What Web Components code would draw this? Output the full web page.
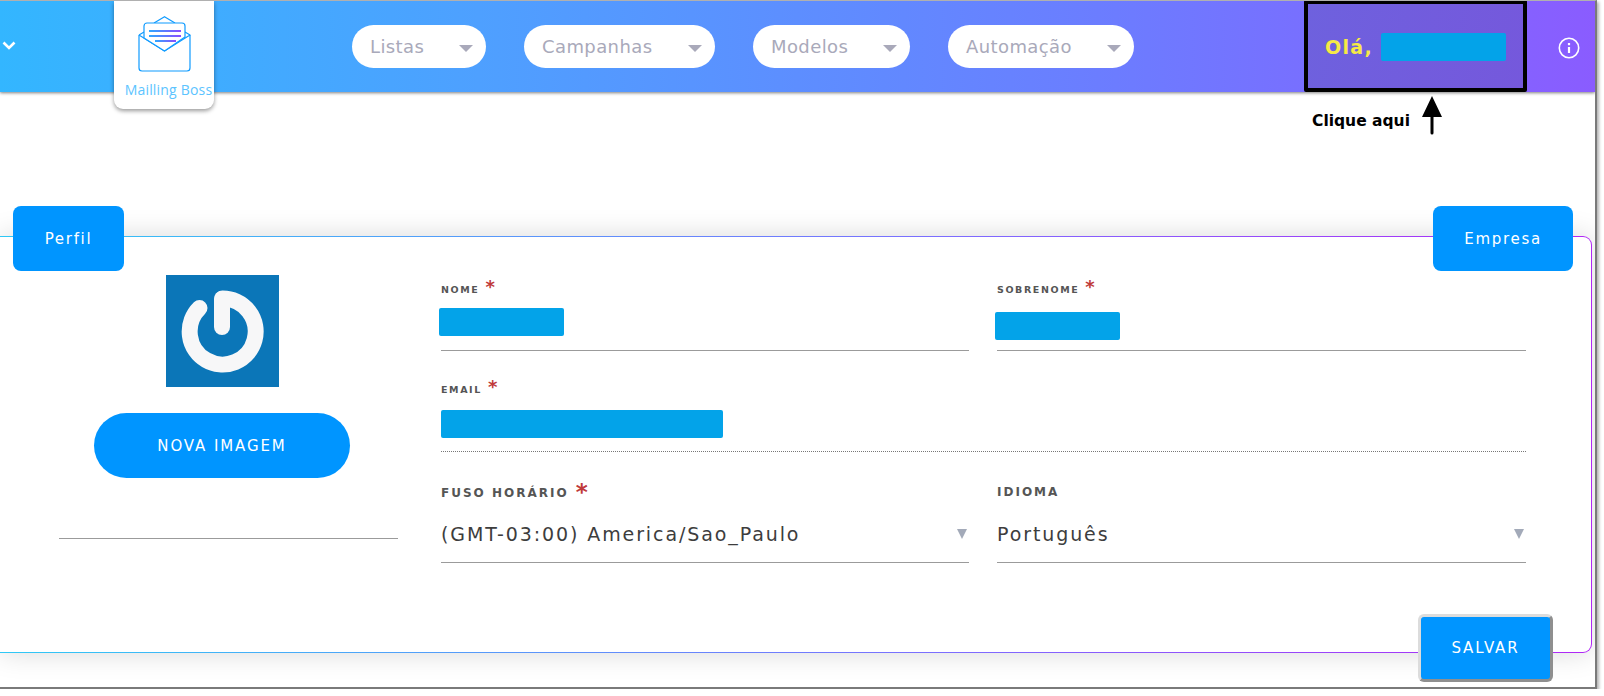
<!DOCTYPE html>
<html lang="pt">
<head>
<meta charset="utf-8">
<title>Mailling Boss</title>
<style>
  html, body { margin: 0; padding: 0; background: #fff; }
  body { font-family: "DejaVu Sans", sans-serif; }
</style>
</head>
<body>
<mb-window>
  <mb-header slot="header">
    <nav-pill style="width:134px">Listas</nav-pill>
    <nav-pill style="width:191px">Campanhas</nav-pill>
    <nav-pill style="width:157px">Modelos</nav-pill>
    <nav-pill style="width:186px">Automação</nav-pill>
  </mb-header>
  <profile-card>
    <mb-tab slot="tabs" style="width:111px">Perfil</mb-tab>
    <mb-tab slot="tabs" style="width:140px">Empresa</mb-tab>

    <form-field label="Nome" required style="height:76px">
      <redact-block style="width:125px;margin:13px 0 0 -2px"></redact-block>
    </form-field>
    <form-field label="Sobrenome" required style="height:76px">
      <redact-block style="width:125px;margin:17px 0 0 -2px"></redact-block>
    </form-field>
    <form-field label="Email" required dotted wide style="height:77px">
      <redact-block style="width:282px;margin:15px 0 0 0"></redact-block>
    </form-field>
    <form-field label="Fuso horário" required big select style="height:87px">(GMT-03:00) America/Sao_Paulo</form-field>
    <form-field label="Idioma" big select style="height:87px">Português</form-field>
  </profile-card>
</mb-window>

<script>
class MbWindow extends HTMLElement {
  constructor() {
    super();
    this.attachShadow({ mode: 'open' });
    this.shadowRoot.innerHTML = `
      <style>
        :host {
          display: block;
          position: relative;
          box-sizing: border-box;
          width: 1597px;
          height: 689px;
          border-top: 1px solid #b0b0b0;
          border-right: 2px solid #7a7a7a;
          border-bottom: 2px solid #7a7a7a;
          background: #fff;
          box-shadow: 2px 2px 3px rgba(0, 0, 0, .3);
          overflow: hidden;
        }
      </style>
      <slot name="header"></slot>
      <slot></slot>
    `;
  }
}

class MbHeader extends HTMLElement {
  constructor() {
    super();
    this.attachShadow({ mode: 'open' });
    this.shadowRoot.innerHTML = `
      <style>
        :host {
          display: flex;
          align-items: flex-start;
          position: relative;
          z-index: 2;
          height: 91px;
          background: linear-gradient(90deg, #33b6ff 0%, #4ea0ff 30%, #6c7cff 70%, #8a5cff 100%);
          box-shadow: 0 1px 3px rgba(0, 0, 0, .5);
        }
        .chevron { margin: 40px 0 0 2px; width: 14px; height: 9px; flex: none; }
        .logo {
          flex: none;
          box-sizing: border-box;
          width: 100px;
          height: 108px;
          margin-left: 98px;
          padding-top: 15px;
          background: #fff;
          border-radius: 0 0 9px 9px;
          box-shadow: 0 2px 4px rgba(0, 0, 0, .4);
          text-align: center;
          font: 14px "Open Sans", sans-serif;
          letter-spacing: .2px;
          color: #5cc4ff;
        }
        .logo svg { display: block; margin: 0 0 8px 24px; }
        .logo span { display: block; white-space: nowrap; margin-left: 9px; }
        nav { display: flex; gap: 38px; margin: 24px 0 0 138px; }
        .user {
          flex: none;
          box-sizing: border-box;
          display: flex;
          align-items: center;
          width: 223px;
          height: 92px;
          margin: -1px 0 0 170px;
          padding: 2px 0 0 17px;
          border: 4px solid #000;
          border-radius: 2px;
          background: linear-gradient(100deg, #6e61de, #7558dc);
          font: bold 19px "DejaVu Sans", sans-serif;
          letter-spacing: 1.3px;
          color: #f6e946;
        }
        .user redact-block { margin-left: 8px; }
        .info { flex: none; margin: 36px 0 0 31px; }
      </style>
      <svg class="chevron" viewBox="0 0 14 9" fill="none" stroke="#fff" stroke-width="2.6"><path d="M1.5 1.5 7 7l5.5-5.5"/></svg>
      <div class="logo">
        <svg width="54" height="56" viewBox="0 0 54 56" fill="none">
          <defs>
            <linearGradient id="ln" x1="0" x2="1" y1="0" y2="0"><stop offset="0" stop-color="#2fa8ff"/><stop offset="1" stop-color="#8a4dff"/></linearGradient>
          </defs>
          <g stroke="#0f9bff" stroke-width="1.2" stroke-linejoin="round">
            <path d="M1 19V52a3 3 0 0 0 3 3H49a3 3 0 0 0 3-3V19"/>
            <path d="M1 19 6 16M1 19 26.5 35 52 19 47 16"/>
            <path d="M16 7 26.5 .7 37 7"/>
            <path d="M6 16V10a3 3 0 0 1 3-3H44a3 3 0 0 1 3 3v11L26.5 35 6 22z" fill="#fff"/>
          </g>
          <rect x="11" y="14" width="32" height="2" fill="url(#ln)"/>
          <rect x="11" y="19" width="32" height="2" fill="url(#ln)"/>
          <rect x="17" y="24" width="21" height="2" fill="url(#ln)"/>
        </svg>
        <span>Mailling Boss</span>
      </div>
      <nav><slot></slot></nav>
      <div class="user">Olá,<redact-block style="width:125px"></redact-block></div>
      <svg class="info" width="22" height="22" viewBox="0 0 22 22" fill="none" stroke="#fff">
        <circle cx="11" cy="11" r="9.7" stroke-width="1.6"/>
        <path d="M11 10v6" stroke-width="2.2"/>
        <path d="M11 6v2.2" stroke-width="2.2"/>
      </svg>
    `;
  }
}

class NavPill extends HTMLElement {
  constructor() {
    super();
    this.attachShadow({ mode: 'open' });
    this.shadowRoot.innerHTML = `
      <style>
        :host {
          display: flex;
          align-items: center;
          justify-content: space-between;
          box-sizing: border-box;
          height: 43px;
          padding: 0 13px 0 18px;
          background: #fff;
          border-radius: 22px;
          font: 18px "DejaVu Sans", sans-serif;
          letter-spacing: .4px;
          color: #a9a9ba;
          white-space: nowrap;
        }
        i { width: 0; height: 0; margin-top: 3px; border: 7px solid transparent; border-bottom: 0; border-top: 7px solid #a9a9ba; }
      </style>
      <slot></slot><i></i>
    `;
  }
}

class RedactBlock extends HTMLElement {
  constructor() {
    super();
    this.attachShadow({ mode: 'open' });
    this.shadowRoot.innerHTML = `
      <style>
        :host { display: block; height: 28px; background: #03a3e9; border-radius: 2px; flex: none; }
      </style>
    `;
  }
}

class MbTab extends HTMLElement {
  constructor() {
    super();
    this.attachShadow({ mode: 'open' });
    this.shadowRoot.innerHTML = `
      <style>
        :host {
          display: flex;
          align-items: center;
          justify-content: center;
          height: 65px;
          background: #0095ff;
          border-radius: 8px;
          color: #fff;
          font: 15px "DejaVu Sans", sans-serif;
          letter-spacing: 1.7px;
        }
      </style>
      <slot></slot>
    `;
  }
}

class ProfileCard extends HTMLElement {
  constructor() {
    super();
    this.attachShadow({ mode: 'open' });
    this.shadowRoot.innerHTML = `
      <style>
        :host {
          display: grid;
          grid-template-columns: 339px 1fr;
          column-gap: 43px;
          position: relative;
          box-sizing: border-box;
          width: 1592px;
          height: 417px;
          margin-top: 144px;
          padding: 38px 66px 0 59px;
          border: 1px solid transparent;
          border-left: 0;
          border-radius: 0 9px 9px 0;
          background: linear-gradient(#fff, #fff) padding-box,
                      linear-gradient(90deg, #2fc8f5, #7d6cff 60%, #b026f5) border-box;
          box-shadow: 0 0 28px rgba(0, 0, 0, .15);
        }
        .tabs {
          position: absolute;
          top: -31px;
          left: 13px;
          right: 18px;
          display: flex;
          justify-content: space-between;
        }
        .side { display: flex; flex-direction: column; align-items: center; padding-right: 13px; }
        .avatar { display: block; }
        .new-image {
          display: flex;
          align-items: center;
          justify-content: center;
          width: 256px;
          height: 65px;
          margin-top: 26px;
          background: #0095ff;
          border-radius: 33px;
          color: #fff;
          font: 15px "DejaVu Sans", sans-serif;
          letter-spacing: 1.9px;
        }
        .side hr { align-self: stretch; margin: 60px -13px 0 0; border: 0; border-top: 1px solid #9b9b9b; }
        .fields {
          display: grid;
          grid-template-columns: 528px 529px;
          column-gap: 28px;
          row-gap: 24px;
          align-content: start;
        }
        .save {
          position: absolute;
          right: 38px;
          bottom: -30px;
          box-sizing: border-box;
          display: flex;
          align-items: center;
          justify-content: center;
          width: 135px;
          height: 68px;
          background: #0095ff;
          border: 3px solid;
          border-color: #dcdcdc #8f8f8f #8f8f8f #dcdcdc;
          border-radius: 6px;
          color: #fff;
          font: 15px "DejaVu Sans", sans-serif;
          letter-spacing: 1.9px;
        }
      </style>
      <div class="tabs"><slot name="tabs"></slot></div>
      <div class="side">
        <svg class="avatar" width="113" height="112" viewBox="0 0 113 112" fill="none" stroke="#f7f7f8" stroke-width="16" stroke-linecap="round">
          <rect width="113" height="112" fill="#0b76b8" stroke="none"/>
          <g style="filter:blur(.5px)">
            <path d="M56.5 23.5A33 33 0 1 1 33.5 33"/>
            <path d="M56 24V52"/>
          </g>
        </svg>
        <div class="new-image">NOVA IMAGEM</div>
        <hr>
      </div>
      <div class="fields"><slot></slot></div>
      <div class="save">SALVAR</div>
    `;
  }
}

class FormField extends HTMLElement {
  constructor() {
    super();
    this.attachShadow({ mode: 'open' });
    const star = this.hasAttribute('required') ? '<b>*</b>' : '';
    const arrow = this.hasAttribute('select') ? '<i></i>' : '';
    this.shadowRoot.innerHTML = `
      <style>
        :host {
          display: flex;
          flex-direction: column;
          box-sizing: border-box;
          border-bottom: 1px solid #9b9b9b;
          color: #3d3d3d;
        }
        :host([dotted]) { border-bottom: 1px dotted #777; }
        :host([wide]) { grid-column: 1 / -1; }
        label {
          display: block;
          height: 20px;
          font: bold 9.5px/30px "DejaVu Sans", sans-serif;
          letter-spacing: 1.6px;
          text-transform: uppercase;
          color: #555;
        }
        :host([big]) label { font-size: 12px; line-height: 32px; height: 30px; letter-spacing: 2px; }
        label b { margin-left: 6px; color: #bf3a3a; font: bold 18px "DejaVu Sans", sans-serif; letter-spacing: 0; }
        :host([big]) label b { position: relative; top: 3px; font-size: 23px; margin-left: 7px; }
        .value {
          display: flex;
          align-items: center;
          justify-content: space-between;
          font: 19px "DejaVu Sans", sans-serif;
          letter-spacing: 1.9px;
          white-space: nowrap;
        }
        :host([select]) .value { height: 44px; margin-top: 6px; }
        i { width: 0; height: 0; margin-right: 2px; border: 5px solid transparent; border-bottom: 0; border-top: 10px solid #a3aab9; }
      </style>
      <label>${this.getAttribute('label')}${star}</label>
      <div class="value"><span><slot></slot></span>${arrow}</div>
    `;
  }
}

customElements.define('mb-window', MbWindow);
customElements.define('mb-header', MbHeader);
customElements.define('nav-pill', NavPill);
customElements.define('redact-block', RedactBlock);
customElements.define('mb-tab', MbTab);
customElements.define('profile-card', ProfileCard);
customElements.define('form-field', FormField);

// annotation drawn on top of the screenshot
class ClickHint extends HTMLElement {
  constructor() {
    super();
    this.attachShadow({ mode: 'open' });
    this.shadowRoot.innerHTML = `
      <style>
        :host {
          position: absolute;
          left: 1312px;
          top: 96px;
          z-index: 3;
          display: flex;
          align-items: flex-end;
          gap: 12px;
          font: bold 15.5px "DejaVu Sans", sans-serif;
          color: #000;
        }
        span { margin-bottom: 5px; }
      </style>
      <span>Clique aqui</span>
      <svg width="20" height="39" viewBox="0 0 20 39"><path d="M10 0 20 21H11.5V37a1.5 1.5 0 0 1-3 0V21H0z"/></svg>
    `;
  }
}
customElements.define('click-hint', ClickHint);
document.body.appendChild(document.createElement('click-hint'));
</script>
</body>
</html>
